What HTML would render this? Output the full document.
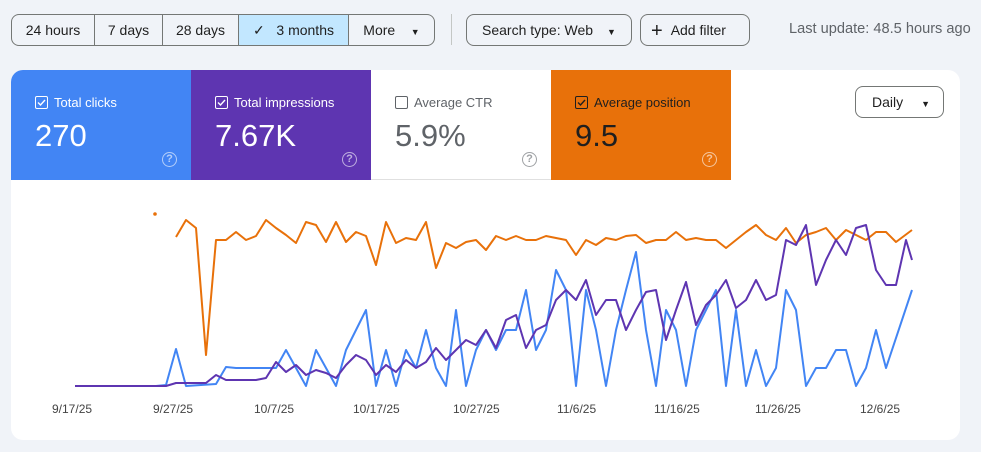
<!DOCTYPE html><html><head><style>
body{margin:0;width:981px;height:452px;background:#f0f3f8;font-family:"Liberation Sans",sans-serif;position:relative;overflow:hidden}
.seg{position:absolute;top:14px;left:11px;height:30px;border:1px solid #747775;border-radius:8px;display:flex;overflow:hidden}
.seg div{text-align:center;line-height:30px;font-size:14px;color:#1f1f1f;border-right:1px solid #747775;box-sizing:border-box}
.seg div:last-child{border-right:0}
.btn{position:absolute;top:14px;height:30px;border:1px solid #747775;border-radius:8px;line-height:30px;font-size:14px;color:#1f1f1f;box-sizing:content-box}
.card{position:absolute;left:11px;top:70px;width:949px;height:370px;background:#fff;border-radius:12px;overflow:hidden}
.t{position:absolute;top:0;width:180px;height:110px}
.t .l{position:absolute;left:24px;top:25px;font-size:13px}
.t .cb{display:inline-block;width:11px;height:11px;border:1px solid;border-radius:2px;vertical-align:-2px;margin-right:6px;position:relative}
.t .v{position:absolute;left:24px;top:48px;font-size:31px}
.t .q{position:absolute;left:151px;top:82px;width:13px;height:13px;border:1.5px solid;border-radius:50%;font-size:11px;font-weight:bold;text-align:center;line-height:13px;opacity:.6}
.ax{position:absolute;top:332px;font-size:12px;color:#444}
</style></head><body>
<div class="seg"><div style="width:83px">24 hours</div><div style="width:68px">7 days</div><div style="width:76px">28 days</div><div style="width:110px;background:#c2e7ff">✓&nbsp;&nbsp; 3 months</div><div style="width:85px">More &nbsp;&nbsp;&nbsp;<span style="font-size:9px">▼</span></div></div>
<div style="position:absolute;left:451px;top:14px;width:1px;height:31px;background:#c4c7c5"></div>
<div class="btn" style="left:466px;width:164px;padding-left:0"><span style="margin-left:15px">Search type: Web</span><span style="font-size:9px;margin-left:14px">▼</span></div>
<div class="btn" style="left:640px;width:108px"><span style="margin-left:10px;font-size:20px;vertical-align:-2px">+</span><span style="margin-left:8px">Add filter</span></div>
<div style="position:absolute;left:789px;top:21px;font-size:14.6px;color:#5f6368">Last update: 48.5 hours ago</div>
<div class="card">
<div class="t" style="left:0;background:#4285f4;color:#fff"><div class="l"><span class="cb" style="border-color:#fff"><svg width="11" height="11" style="position:absolute;left:0;top:0"><path d="M2 5.5l2.5 2.5 4.5-5" stroke="#fff" fill="none" stroke-width="1.4"/></svg></span>Total clicks</div><div class="v">270</div><div class="q">?</div></div>
<div class="t" style="left:180px;background:#5e35b1;color:#fff"><div class="l"><span class="cb" style="border-color:#fff"><svg width="11" height="11" style="position:absolute;left:0;top:0"><path d="M2 5.5l2.5 2.5 4.5-5" stroke="#fff" fill="none" stroke-width="1.4"/></svg></span>Total impressions</div><div class="v">7.67K</div><div class="q">?</div></div>
<div class="t" style="left:360px;background:#fff;color:#5f6368;border-bottom:1px solid #e0e0e0;box-sizing:border-box"><div class="l"><span class="cb" style="border-color:#5f6368"></span>Average CTR</div><div class="v">5.9%</div><div class="q">?</div></div>
<div class="t" style="left:540px;background:#e8710a;color:#1f1f1f"><div class="l"><span class="cb" style="border-color:#1f1f1f"><svg width="11" height="11" style="position:absolute;left:0;top:0"><path d="M2 5.5l2.5 2.5 4.5-5" stroke="#1f1f1f" fill="none" stroke-width="1.4"/></svg></span>Average position</div><div class="v">9.5</div><div class="q" style="color:#fff;border-color:#fff">?</div></div>
<div style="position:absolute;left:844px;top:16px;width:87px;height:30px;border:1px solid #747775;border-radius:8px;font-size:14px;line-height:30px;color:#1f1f1f"><span style="margin-left:16px">Daily</span><span style="font-size:9px;margin-left:18px">▼</span></div>
<div class="ax" style="left:41px">9/17/25</div><div class="ax" style="left:142px">9/27/25</div><div class="ax" style="left:243px">10/7/25</div><div class="ax" style="left:342px">10/17/25</div><div class="ax" style="left:442px">10/27/25</div><div class="ax" style="left:546px">11/6/25</div><div class="ax" style="left:643px">11/16/25</div><div class="ax" style="left:744px">11/26/25</div><div class="ax" style="left:849px">12/6/25</div>
</div>
<svg width="981" height="452" style="position:absolute;left:0;top:0" fill="none" stroke-width="2" stroke-linejoin="round">
<circle cx="155" cy="214" r="1.8" fill="#e8710a"/>
<polyline stroke="#e8710a" points="176,237 186,220 196,228 206,355 216,240 226,240 236,232 246,240 256,236 266,220 276,228 286,235 296,243 306,222 316,225 326,242 336,222 346,242 356,232 366,236 376,265 386,222 396,243 406,238 416,240 426,222 436,268 446,243 456,248 466,242 476,240 486,250 496,236 506,240 516,236 526,240 536,240 546,236 556,238 566,240 576,255 586,240 596,245 606,238 616,240 626,236 636,235 646,243 656,240 666,240 676,232 686,240 696,238 706,240 716,240 726,248 736,240 746,232 756,225 766,235 776,240 786,228 796,243 806,235 816,232 826,228 836,240 846,230 856,235 866,240 876,232 886,232 896,242 912,230"/>
<polyline stroke="#4285f4" points="75,386 156,386 166,385 176,349 186,386 216,384 226,367 236,368 276,368 286,350 296,368 306,386 316,350 326,368 336,386 346,350 356,330 366,310 376,386 386,350 396,386 406,350 416,368 426,330 436,368 446,386 456,310 466,386 476,350 486,330 496,350 506,330 516,330 526,290 536,350 546,330 556,270 566,290 576,386 586,290 596,330 606,386 616,330 626,290 636,252 646,330 656,386 666,310 676,330 686,386 696,330 706,310 716,290 726,386 736,310 746,386 756,350 766,386 776,368 786,290 796,310 806,386 816,368 826,368 836,350 846,350 856,386 866,368 876,330 886,368 912,290"/>
<polyline stroke="#5e35b1" points="75,386 166,386 176,383 206,383 216,375 226,380 256,380 266,378 276,362 286,372 296,365 306,375 316,370 326,373 336,378 346,365 356,355 366,360 376,375 386,365 396,372 406,360 416,368 426,362 436,348 446,360 456,350 466,340 476,345 486,330 496,348 506,320 516,315 526,348 536,330 546,325 556,300 566,290 576,300 586,280 596,315 606,300 616,300 626,330 636,310 646,292 656,290 666,340 676,310 686,282 696,325 706,305 716,295 726,280 736,308 746,300 756,280 766,300 776,295 786,240 796,245 806,225 816,285 826,260 836,240 846,255 856,228 866,225 876,270 886,285 896,285 906,240 912,260"/>
</svg>
</body></html>
